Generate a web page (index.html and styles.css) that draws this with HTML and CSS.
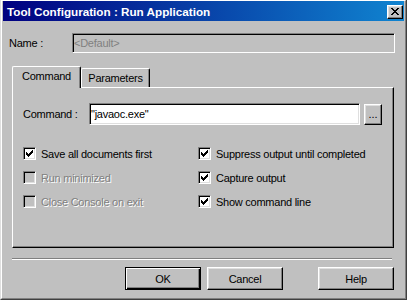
FILE: index.html
```html
<!DOCTYPE html>
<html>
<head>
<meta charset="utf-8">
<title>Tool Configuration : Run Application</title>
<link rel="stylesheet" href="styles.css">
</head>
<body>
<div class="window">
  <div class="frame">
    <div class="titlebar">
      <span class="title">Tool Configuration : Run Application</span>
      <button class="close" aria-label="Close">
        <svg class="close-x" width="8" height="7" viewBox="0 0 8 7" shape-rendering="crispEdges"><path d="M0 0h2v1H0zM6 0h2v1H6zM1 1h2v1H1zM5 1h2v1H5zM2 2h4v1H2zM3 3h2v1H3zM2 4h4v1H2zM1 5h2v1H1zM5 5h2v1H5zM0 6h2v1H0zM6 6h2v1H6z" fill="#000"/></svg>
      </button>
    </div>
    <div class="content">
      <div class="name-row">
        <span class="name-label">Name :</span>
        <div class="field disabled">&lt;Default&gt;</div>
      </div>
      <div class="tabs">
        <div class="tab active">Command</div>
        <div class="tab">Parameters</div>
      </div>
      <div class="panel">
        <div class="cmd-row">
          <span class="cmd-label">Command :</span>
          <div class="field">"javaoc.exe"</div>
          <button class="btn browse">...</button>
        </div>
        <div class="checks">
          <div class="check"><span class="box"><svg width="7" height="7" viewBox="0 0 7 7" shape-rendering="crispEdges"><path d="M0 2h1v3H0zM1 3h1v3H1zM2 4h1v3H2zM3 3h1v3H3zM4 2h1v3H4zM5 1h1v3H5zM6 0h1v3H6z" fill="#000"/></svg></span><span>Save all documents first</span></div>
          <div class="check"><span class="box"><svg width="7" height="7" viewBox="0 0 7 7" shape-rendering="crispEdges"><path d="M0 2h1v3H0zM1 3h1v3H1zM2 4h1v3H2zM3 3h1v3H3zM4 2h1v3H4zM5 1h1v3H5zM6 0h1v3H6z" fill="#000"/></svg></span><span>Suppress output until completed</span></div>
          <div class="check disabled"><span class="box"></span><span>Run minimized</span></div>
          <div class="check"><span class="box"><svg width="7" height="7" viewBox="0 0 7 7" shape-rendering="crispEdges"><path d="M0 2h1v3H0zM1 3h1v3H1zM2 4h1v3H2zM3 3h1v3H3zM4 2h1v3H4zM5 1h1v3H5zM6 0h1v3H6z" fill="#000"/></svg></span><span>Capture output</span></div>
          <div class="check disabled"><span class="box"></span><span>Close Console on exit</span></div>
          <div class="check"><span class="box"><svg width="7" height="7" viewBox="0 0 7 7" shape-rendering="crispEdges"><path d="M0 2h1v3H0zM1 3h1v3H1zM2 4h1v3H2zM3 3h1v3H3zM4 2h1v3H4zM5 1h1v3H5zM6 0h1v3H6z" fill="#000"/></svg></span><span>Show command line</span></div>
        </div>
      </div>
      <div class="separator"></div>
      <div class="buttons">
        <button class="btn default">OK</button>
        <button class="btn cancel">Cancel</button>
        <button class="btn help">Help</button>
      </div>
    </div>
  </div>
</div>
</body>
</html>
```

FILE: styles.css
```css
* { box-sizing: border-box; }
html, body { margin: 0; padding: 0; }
body {
  width: 407px;
  height: 300px;
  overflow: hidden;
  background: #c0c0c0;
  font-family: "Liberation Sans", Arial, sans-serif;
  font-size: 11px;
  letter-spacing: -0.25px;
  color: #000;
}
button {
  font: inherit;
  letter-spacing: inherit;
  color: inherit;
  padding: 0;
  margin: 0;
}
.window {
  width: 407px;
  height: 300px;
  border-style: solid;
  border-width: 0 1px 1px 1px;
  border-color: #dfdfdf #404040 #404040 #dfdfdf;
  background: #c0c0c0;
}
.frame {
  height: 100%;
  border-style: solid;
  border-width: 1px;
  border-color: #fff #808080 #808080 #fff;
  padding: 0 1px 1px 1px;
  display: flex;
  flex-direction: column;
}
.titlebar {
  height: 20px;
  flex: 0 0 20px;
  display: flex;
  align-items: center;
  padding: 0 1px 0 4px;
  background: linear-gradient(to right, #000080, #1084d0);
}
.title {
  color: #fff;
  font-weight: bold;
  font-size: 11.7px;
  letter-spacing: 0;
  white-space: nowrap;
}
.close {
  margin-left: auto;
  align-self: flex-start;
  margin-top: 4px;
  width: 16px;
  height: 14px;
  background: #c0c0c0;
  border: 1px solid;
  border-color: #fff #000 #000 #fff;
  box-shadow: inset -1px -1px #808080, inset 1px 1px #dfdfdf;
  display: flex;
  align-items: flex-start;
  justify-content: flex-start;
  padding: 2px 0 0 3px;
}
.close-x { display: block; }
.content {
  flex: 1;
  display: flex;
  flex-direction: column;
  padding: 0 10px 0 9px;
}
.name-row {
  display: flex;
  align-items: center;
  height: 20px;
  margin: 12px -1px 0 -3px;
}
.name-label {
  flex: 0 0 63px;
}
.field {
  flex: 1;
  height: 100%;
  display: flex;
  align-items: center;
  padding: 0 1px;
  background: #fff;
  border: 1px solid;
  border-color: #808080 #fff #fff #808080;
  box-shadow: inset 1px 1px #000, inset -1px -1px #dfdfdf;
  white-space: nowrap;
}
.field.disabled {
  background: #c0c0c0;
  color: #808080;
  box-shadow: inset 1px 1px #000, inset -1px -1px #c0c0c0;
}
.tabs {
  display: flex;
  align-items: flex-end;
  height: 21px;
  margin-top: 13px;
  position: relative;
  z-index: 1;
}
.tab {
  width: 69px;
  height: 19px;
  padding-top: 3px;
  line-height: 13px;
  text-align: center;
  background: #c0c0c0;
  border-style: solid;
  border-width: 1px 1px 0 1px;
  border-color: #fff #000 #000 #fff;
  border-radius: 2px 2px 0 0;
  box-shadow: inset -1px 0 #808080;
}
.tab.active {
  height: 22px;
  margin-bottom: -1px;
  padding-top: 3px;
}
.panel {
  height: 161px;
  flex: 0 0 161px;
  border: 1px solid;
  border-color: #fff #000 #000 #fff;
  box-shadow: inset -1px -1px #808080;
  padding: 0 11px 0 10px;
  display: flex;
  flex-direction: column;
}
.cmd-row {
  display: flex;
  align-items: center;
  height: 22px;
  margin-top: 15px;
}
.cmd-label {
  flex: 0 0 66px;
}
.btn {
  background: #c0c0c0;
  border: 1px solid;
  border-color: #fff #000 #000 #fff;
  box-shadow: inset -1px -1px #808080, inset 1px 1px #dfdfdf;
  text-align: center;
  height: 23px;
  width: 76px;
}
.btn.browse {
  width: 18px;
  height: 21px;
  margin-left: 4px;
  letter-spacing: 0;
}
.btn.default {
  border-color: #000;
  box-shadow: inset 1px 1px #fff, inset -1px -1px #000, inset -2px -2px #808080;
}
.btn.cancel { margin-left: 6px; }
.btn.help { margin-left: 35px; }
.checks {
  margin-top: 22px;
  display: grid;
  grid-template-columns: 175px 1fr;
  row-gap: 11px;
}
.check {
  display: flex;
  align-items: center;
  gap: 5px;
  height: 13px;
  white-space: nowrap;
}
.box {
  flex: 0 0 13px;
  width: 13px;
  height: 13px;
  background: #fff;
  border: 1px solid;
  border-color: #808080 #fff #fff #808080;
  box-shadow: inset 1px 1px #000, inset -1px -1px #dfdfdf;
  padding: 2px 0 0 2px;
}
.box svg { display: block; }
.check.disabled { color: #808080; text-shadow: 1px 1px 0 #fff; }
.check.disabled .box { background: #c0c0c0; }
.separator {
  height: 2px;
  margin: 10px 2px 0 0;
  border-top: 1px solid #808080;
  border-bottom: 1px solid #fff;
}
.buttons {
  display: flex;
  justify-content: flex-end;
  margin-top: 7px;
}
```
